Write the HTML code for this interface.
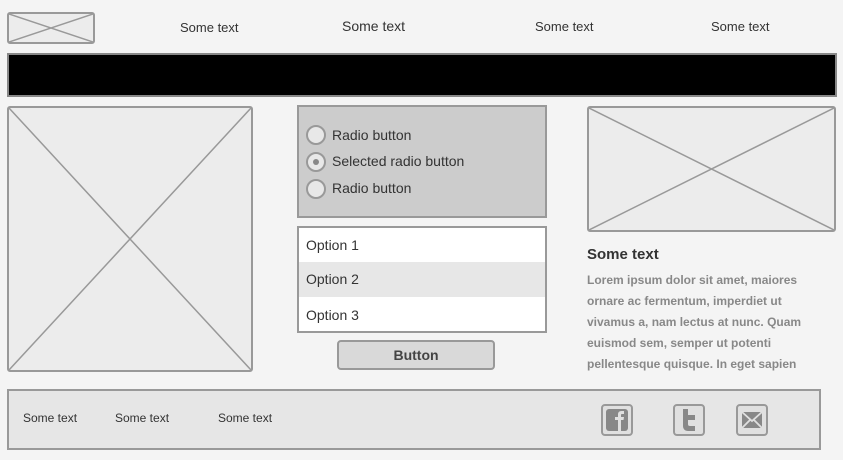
<!DOCTYPE html>
<html><head><style>
*{margin:0;padding:0;box-sizing:border-box}
body{width:843px;height:460px;background:#f4f4f4;position:relative;font-family:"Liberation Sans",sans-serif;color:#333;overflow:hidden}
.a{position:absolute}
.ph{border:2px solid #999;background:#ececec;border-radius:3px}
.ph svg{position:absolute;left:0;top:0;width:100%;height:100%}
.nav{font-size:13px;color:#333}
.radio{position:absolute;left:7px;width:20px;height:20px;border:2px solid #999;border-radius:50%;background:#e8e8e8}
.rl{position:absolute;left:33px;font-size:14px;color:#333}
.opt{position:absolute;left:0;width:100%;height:35px;line-height:35px;padding-left:7px;font-size:14px;color:#333}
.ic{position:absolute;top:404px;width:32px;height:32px;border:2px solid #999;border-radius:4px;background:#e0e0e0}
</style></head><body>
<div class="a ph" style="left:7px;top:12px;width:88px;height:32px"><svg viewBox="0 0 84 28" preserveAspectRatio="none"><path d="M0 0L84 28M84 0L0 28" stroke="#999" stroke-width="1.5"/></svg></div>
<div class="a nav" style="left:180px;top:20px">Some text</div>
<div class="a nav" style="left:342px;top:18px;font-size:14px">Some text</div>
<div class="a nav" style="left:535px;top:19px">Some text</div>
<div class="a nav" style="left:711px;top:19px">Some text</div>
<div class="a" style="left:7px;top:53px;width:830px;height:44px;background:#000;border:2px solid #888"></div>
<div class="a ph" style="left:7px;top:106px;width:246px;height:266px"><svg viewBox="0 0 242 262" preserveAspectRatio="none"><path d="M0 0L242 262M242 0L0 262" stroke="#999" stroke-width="1.5"/></svg></div>
<div class="a" style="left:297px;top:105px;width:250px;height:113px;background:#ccc;border:2px solid #999">
<div class="radio" style="top:18px"></div><div class="rl" style="top:20px">Radio button</div>
<div class="radio" style="top:45px"><div style="position:absolute;left:5px;top:5px;width:6px;height:6px;border-radius:50%;background:#888"></div></div><div class="rl" style="top:46px">Selected radio button</div>
<div class="radio" style="top:72px"></div><div class="rl" style="top:73px">Radio button</div>
</div>
<div class="a" style="left:297px;top:226px;width:250px;height:107px;background:#fff;border:2px solid #999;overflow:hidden">
<div class="opt" style="top:0">Option 1</div>
<div class="opt" style="top:34px;background:#e7e7e7">Option 2</div>
<div class="opt" style="top:70px">Option 3</div>
</div>
<div class="a" style="left:337px;top:340px;width:158px;height:30px;background:#d9d9d9;border:2px solid #999;border-radius:4px;text-align:center;line-height:26px;font-size:14px;font-weight:bold;color:#444">Button</div>
<div class="a ph" style="left:587px;top:106px;width:249px;height:126px"><svg viewBox="0 0 245 122" preserveAspectRatio="none"><path d="M0 0L245 122M245 0L0 122" stroke="#999" stroke-width="1.5"/></svg></div>
<div class="a" style="left:587px;top:246px;font-size:15px;font-weight:bold;color:#333">Some text</div>
<div class="a" style="left:587px;top:270px;width:230px;font-size:12px;line-height:21px;color:#888;font-weight:bold">Lorem ipsum dolor sit amet, maiores ornare ac fermentum, imperdiet ut vivamus a, nam lectus at nunc. Quam euismod sem, semper ut potenti pellentesque quisque. In eget sapien</div>
<div class="a" style="left:7px;top:389px;width:814px;height:61px;background:#e6e6e6;border:2px solid #999"></div>
<div class="a" style="left:23px;top:411px;font-size:12px">Some text</div>
<div class="a" style="left:115px;top:411px;font-size:12px">Some text</div>
<div class="a" style="left:218px;top:411px;font-size:12px">Some text</div>
<div class="ic" style="left:601px"><svg width="28" height="28" viewBox="0 0 28 28"><rect x="3" y="3" width="22" height="22" rx="3" fill="#888"/><path d="M15 25V14h-3v-3h3V8.5c0-2 1-3.5 3.5-3.5H21v3h-2c-.8 0-1 .4-1 1V11h3l-.5 3H18v11z" fill="#e0e0e0"/></svg></div>
<div class="ic" style="left:673px"><svg width="28" height="28" viewBox="0 0 28 28"><path d="M8 3h5v6h7v5h-7v4c0 1.5.8 2 2 2h5v5h-7c-3 0-5-2-5-5z" fill="#888"/></svg></div>
<div class="ic" style="left:736px"><svg width="28" height="28" viewBox="0 0 28 28"><rect x="4" y="6" width="20" height="16" fill="#888"/><path d="M4 6l10 9 10-9M4 22l8-8M24 22l-8-8" stroke="#e0e0e0" stroke-width="1.8" fill="none"/></svg></div>
</body></html>
